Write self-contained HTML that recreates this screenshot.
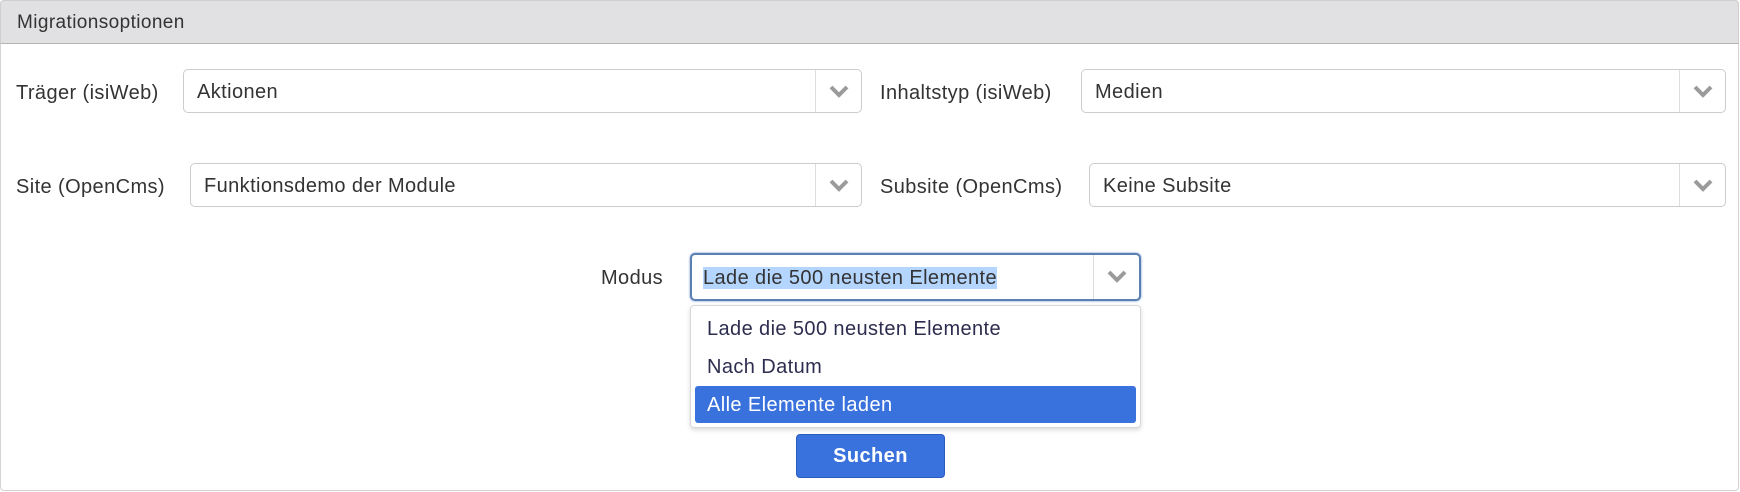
<!DOCTYPE html>
<html><head><meta charset="utf-8"><style>
*{box-sizing:border-box;margin:0;padding:0}
body{width:1740px;height:492px;background:#fff;font-family:"Liberation Sans",sans-serif;color:#333;position:relative;overflow:hidden;letter-spacing:0.4px}
.panel{position:absolute;left:0;top:0;width:1739px;height:491px;border:1px solid #d4d4d4;border-radius:4px}
.hdr{position:absolute;left:0;top:0;width:1739px;height:44px;background:#e1e1e3;border:1px solid #cfcfcf;border-bottom:1px solid #b5b5b5;border-radius:4px 4px 0 0;font-size:19px;padding:11px 0 0 16px;color:#333}
.lbl{position:absolute;font-size:20px;color:#333}
.sel{position:absolute;height:44px;border:1px solid #ccc;border-radius:5px;background:#fff;font-size:20px;padding:11px 0 0 13px}
.sel .ar{position:absolute;right:0;top:0;width:46px;height:100%;border-left:1px solid #ddd}
.sel .ar svg{position:absolute;left:13px;top:14px}
.dd{position:absolute;left:690px;top:305px;width:451px;height:123px;border:1px solid #d8d8d8;border-radius:4px;box-shadow:0 2px 5px rgba(0,0,0,.15);background:#fff}
.it{position:absolute;left:4px;width:441px;height:37px;font-size:20px;color:#2d2d4f;padding:8px 0 0 12px}
.btn{position:absolute;left:796px;top:434px;width:149px;height:44px;background:#3a72dd;border:1px solid #2a5cc0;border-radius:4px;color:#fff;font-weight:bold;font-size:20px;text-align:center;padding-top:10px}
</style></head><body>
<div class="panel"></div>
<div class="hdr">Migrationsoptionen</div>

<div class="lbl" style="left:16px;top:82px">Träger (isiWeb)</div>
<div class="sel" style="left:183px;top:69px;width:679px">Aktionen<div class="ar"><svg width="20" height="15" viewBox="0 0 20 15"><path d="M2 3l8 8 8-8" fill="none" stroke="#9b9b9b" stroke-width="4"/></svg></div></div>
<div class="lbl" style="left:880px;top:82px">Inhaltstyp (isiWeb)</div>
<div class="sel" style="left:1081px;top:69px;width:645px">Medien<div class="ar"><svg width="20" height="15" viewBox="0 0 20 15"><path d="M2 3l8 8 8-8" fill="none" stroke="#9b9b9b" stroke-width="4"/></svg></div></div>

<div class="lbl" style="left:16px;top:176px">Site (OpenCms)</div>
<div class="sel" style="left:190px;top:163px;width:672px">Funktionsdemo der Module<div class="ar"><svg width="20" height="15" viewBox="0 0 20 15"><path d="M2 3l8 8 8-8" fill="none" stroke="#9b9b9b" stroke-width="4"/></svg></div></div>
<div class="lbl" style="left:880px;top:176px">Subsite (OpenCms)</div>
<div class="sel" style="left:1089px;top:163px;width:637px">Keine Subsite<div class="ar"><svg width="20" height="15" viewBox="0 0 20 15"><path d="M2 3l8 8 8-8" fill="none" stroke="#9b9b9b" stroke-width="4"/></svg></div></div>

<div class="lbl" style="left:601px;top:267px">Modus</div>
<div class="sel" style="left:690px;top:253px;width:451px;height:48px;border:2px solid #5a7fb3;box-shadow:0 0 2px #6a8fc8;padding:12px 0 0 11px"><span style="background:#b4d5fe">Lade die 500 neusten Elemente</span><div class="ar"><svg width="20" height="15" viewBox="0 0 20 15"><path d="M2 3l8 8 8-8" fill="none" stroke="#9b9b9b" stroke-width="4"/></svg></div></div>

<div class="dd">
<div class="it" style="top:4px">Lade die 500 neusten Elemente</div>
<div class="it" style="top:42px">Nach Datum</div>
<div class="it" style="top:80px;background:#3a72dd;color:#fff;border-radius:3px">Alle Elemente laden</div>
</div>
<div class="btn">Suchen</div>
</body></html>
